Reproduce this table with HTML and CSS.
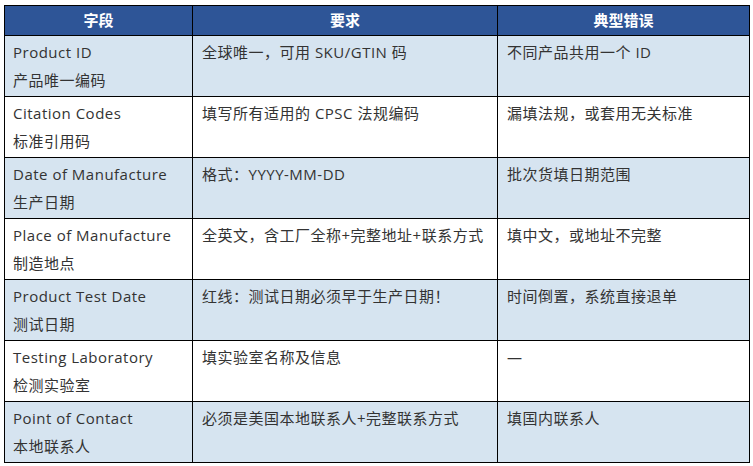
FILE: index.html
```html
<!DOCTYPE html>
<html lang="zh">
<head>
<meta charset="utf-8">
<link rel="stylesheet" href="styles.css">
</head>
<body>
<table class="spec">
  <colgroup>
    <col class="c1"><col class="c2"><col class="c3">
  </colgroup>
  <thead>
    <tr><th>字段</th><th>要求</th><th>典型错误</th></tr>
  </thead>
  <tbody>
    <tr class="alt"><td>Product ID<br>产品唯一编码</td><td>全球唯一，可用 SKU/GTIN 码</td><td>不同产品共用一个 ID</td></tr>
    <tr><td>Citation Codes<br>标准引用码</td><td>填写所有适用的 CPSC 法规编码</td><td>漏填法规，或套用无关标准</td></tr>
    <tr class="alt"><td>Date of Manufacture<br>生产日期</td><td>格式：YYYY-MM-DD</td><td>批次货填日期范围</td></tr>
    <tr><td>Place of Manufacture<br>制造地点</td><td>全英文，含工厂全称+完整地址+联系方式</td><td>填中文，或地址不完整</td></tr>
    <tr class="alt"><td>Product Test Date<br>测试日期</td><td>红线：测试日期必须早于生产日期！</td><td>时间倒置，系统直接退单</td></tr>
    <tr><td>Testing Laboratory<br>检测实验室</td><td>填实验室名称及信息</td><td>—</td></tr>
    <tr class="alt"><td>Point of Contact<br>本地联系人</td><td>必须是美国本地联系人+完整联系方式</td><td>填国内联系人</td></tr>
  </tbody>
</table>
</body>
</html>
```
FILE: styles.css
```css
html, body {
  margin: 0;
  padding: 0;
  background: #ffffff;
}
body {
  font-family: "Open Sans", "Noto Sans CJK SC", sans-serif;
  font-size: 15px;
  color: #333333;
}
.spec {
  margin: 5px 0 0 4px;
  border-collapse: collapse;
  table-layout: fixed;
  width: 745px;
}
.c1 { width: 188px; }
.c2 { width: 305px; }
.c3 { width: 252px; }
.spec th, .spec td {
  border: 1px solid #000000;
}
.spec th {
  background: #2e5597;
  color: #ffffff;
  font-weight: bold;
  height: 29px;
  padding: 0;
  line-height: 29px;
  text-align: center;
}
.spec td {
  vertical-align: top;
  text-align: left;
  line-height: 28px;
  letter-spacing: 0.5px;
  padding: 2px 8px 1px 9px;
  height: 57px;
  box-sizing: content-box;
}
.spec td:first-child {
  padding-left: 8px;
}
.spec tr.alt td {
  background: #d6e4f0;
}
```
